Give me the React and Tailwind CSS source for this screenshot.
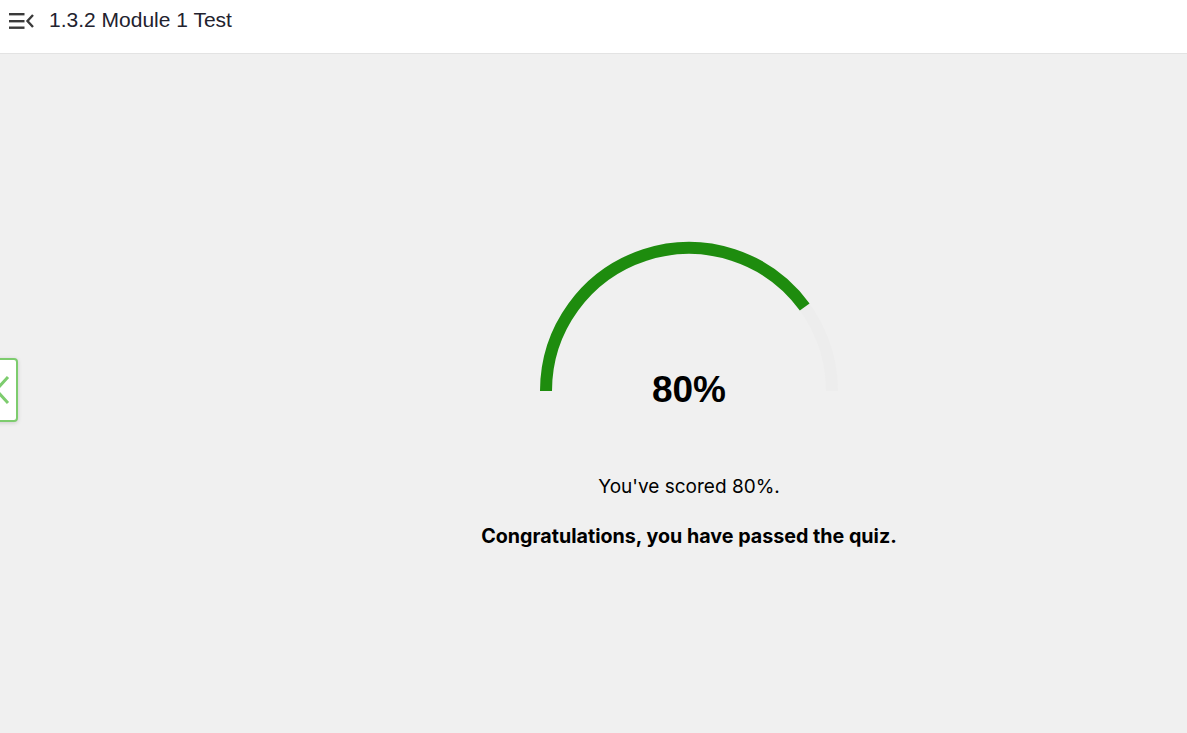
import React from 'react';

function ScoreArc({ percent }) {
  // semicircle, centre (155,155), radius 143
  const r = 143;
  const cx = 155;
  const cy = 155;
  const angle = Math.PI * (1 - percent / 100);
  const ex = cx + r * Math.cos(angle);
  const ey = cy - r * Math.sin(angle);

  return (
    <svg width="310" height="162" viewBox="0 0 310 162" className="block">
      <path
        d={`M ${cx - r} ${cy} A ${r} ${r} 0 0 1 ${cx + r} ${cy}`}
        fill="none"
        stroke="#ededed"
        strokeWidth="12"
      />
      <path
        d={`M ${cx - r} ${cy} A ${r} ${r} 0 0 1 ${ex} ${ey}`}
        fill="none"
        stroke="#1e8c0e"
        strokeWidth="12"
      />
    </svg>
  );
}

export default function App() {
  return (
    <div
      className="w-[1187px] h-[733px] flex flex-col bg-[#f0f0f0] overflow-hidden"
      style={{ fontFamily: 'Inter, "Liberation Sans", sans-serif' }}
    >
      {/* header */}
      <div className="h-[54px] shrink-0 bg-white border-b border-[#e3e3e3] flex items-start pt-[8px] pl-[9px] gap-[15px]">
        <svg width="25" height="24" viewBox="0 0 25 24" className="mt-[1px]">
          <g fill="#3a3a3a">
            <rect x="0" y="4" width="15.5" height="2.4" />
            <rect x="0" y="11" width="15.5" height="2.4" />
            <rect x="0" y="17.5" width="15.5" height="2.4" />
          </g>
          <path d="M24 6 L18.5 12 L24 18" fill="none" stroke="#3a3a3a" strokeWidth="2.4" />
        </svg>
        <div
          className="text-[21px] leading-[24px] text-[#22222e]"
          style={{ fontFamily: '"Liberation Sans", Arial, sans-serif' }}
        >
          1.3.2 Module 1 Test
        </div>
      </div>

      {/* body */}
      <div className="flex-1 flex relative">
        <button className="absolute left-[-24px] top-[304px] w-[42px] h-[64px] bg-white border-2 border-[#7dcc6e] rounded-[4px] shadow-[0_1px_4px_rgba(0,0,0,0.15)] overflow-hidden">
          <svg width="20" height="30" viewBox="0 0 20 30" className="absolute left-[14px] top-[15px]">
            <path d="M16 2 L4 15 L16 28" fill="none" stroke="#7dcc6e" strokeWidth="3" />
          </svg>
        </button>

        <div className="flex-1 flex flex-col items-center pt-[182px] pl-[191px] text-black">
          <div className="relative w-[310px] h-[162px]">
            <ScoreArc percent={80} />
            <div
              className="absolute left-0 right-0 top-[132px] text-center text-[37px] leading-[44px] font-bold"
              style={{ fontFamily: '"Liberation Sans", Arial, sans-serif' }}
            >
              80%
            </div>
          </div>
          <div className="mt-[77px] text-[19px] leading-[24px]">You've scored 80%.</div>
          <div className="mt-[25px] text-[19.7px] leading-[24px] font-bold">
            Congratulations, you have passed the quiz.
          </div>
        </div>
      </div>
    </div>
  );
}
